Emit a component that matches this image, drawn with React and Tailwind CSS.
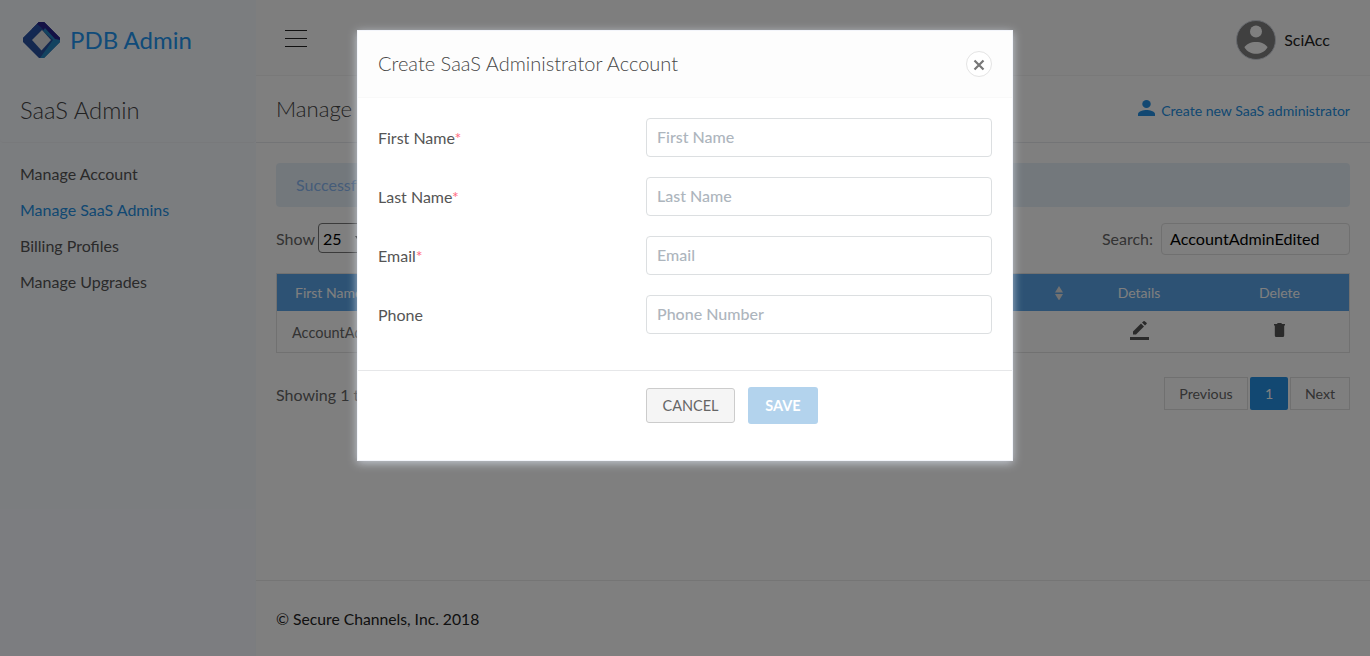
import React from "react";

const NAV = [
  { label: "Manage Account" },
  { label: "Manage SaaS Admins", active: true },
  { label: "Billing Profiles" },
  { label: "Manage Upgrades" },
];

const FIELDS = [
  { label: "First Name", placeholder: "First Name", required: true },
  { label: "Last Name", placeholder: "Last Name", required: true },
  { label: "Email", placeholder: "Email", required: true },
  { label: "Phone", placeholder: "Phone Number" },
];

function Logo() {
  return (
    <svg className="ml-[3px] h-[36px] w-[37px]" viewBox="0 0 37 36">
      <path d="M16 0h5l16 16v4L21 36h-5L0 20v-4z" fill="#28519f" />
      <path d="M16 0h5l16 16v4h-5L19 6l-4 3-6-2z" fill="#28228a" />
      <path d="M16 0L0 16l6 2L19 6l-1-6z" fill="#2750a4" />
      <path d="M16 0h5l16 16v3l-5 1L19 6l-5-4z" fill="#28228a" />
      <path d="M37 18v2L21 36h-4l13-18-10-9 2-3 10 11z" fill="#2787c0" />
      <path d="M19 8L28 18 18.500 28.500 9 18z" fill="#e2e2e4" />
    </svg>
  );
}

function Sidebar() {
  return (
    <aside className="flex w-[256px] shrink-0 flex-col bg-[#f7faff]">
      <div className="flex h-[76px] items-center gap-[10px] pt-[3px] pl-[20px]">
        <Logo />
        <span className="text-[24px] leading-[30px] text-[#2196f3]">PDB Admin</span>
      </div>
      <div className="flex h-[67px] items-center rounded-b border-b border-[#f0f3f6] pl-[20px] text-[23.800px] font-light text-[#444]">
        <span className="pt-[3px]">SaaS Admin</span>
      </div>
      <nav className="flex flex-col pt-[12px] pl-[20px] text-[16px]">
        {NAV.map((n) => (
          <a key={n.label} className={n.active ? "flex h-[36px] items-center pt-px text-[#2491e4]" : "flex h-[36px] items-center pt-px text-[#555]"}>
            {n.label}
          </a>
        ))}
      </nav>
    </aside>
  );
}

function TopBar() {
  return (
    <header className="flex h-[76px] items-center border-b border-[#f2f2f2] bg-[#fdfdfd] pr-[40px] pl-[29px]">
      <div className="mt-[2px] flex h-[17px] w-[22px] flex-col justify-between">
        <span className="h-px bg-[#222]" />
        <span className="h-px bg-[#222]" />
        <span className="h-px bg-[#222]" />
      </div>
      <div className="ml-auto flex items-center gap-[8px] pt-[5px] text-[16px] text-[#222]">
        <svg className="h-[40px] w-[40px]" viewBox="0 0 40 40">
          <circle cx="20" cy="20" r="19.500" fill="#808080" stroke="#cfd3dc" />
          <circle cx="20" cy="11.500" r="6" fill="#fff" />
          <path d="M8.500 27.500C10 24 15 22 20 22s10 2 11.500 5.500C28.500 32 24.500 33.800 20 33.800S11.500 32 8.500 27.500z" fill="#fff" />
        </svg>
        <span>SciAcc</span>
      </div>
    </header>
  );
}

function DataTable() {
  return (
    <div className="mt-[18px] border border-[#e3e3e3]">
      <div className="flex h-[37px] items-center bg-[#5ba5e8] text-[14px] text-[#fff]">
        <span className="w-[732px] pl-[18px]">First Name</span>
        <span className="flex w-[59px] justify-end pr-[5px]">
          <svg className="h-[14px] w-[8px]" viewBox="0 0 8 14">
            <path d="M4 0l4 6.500H0zM4 14.500L8 8H0z" fill="#e2e2e2" />
          </svg>
        </span>
        <span className="w-[142px] text-center">Details</span>
        <span className="flex-1 text-center">Delete</span>
      </div>
      <div className="flex h-[41px] items-center text-[14.500px] text-[#666]">
        <span className="w-[791px] pt-[2px] pl-[15px]">AccountAdminEdited</span>
        <span className="flex w-[142px] justify-center">
          <svg className="mb-[3px] h-[19px] w-[19px]" viewBox="0 0 19 19" fill="#555">
            <path d="M0 16h19v3H0zM3 10.500v3h3l8-8-3-3zM12 1.500l3 3 1.500-1.500q.6-.6 0-1.200L14.700.3q-.6-.6-1.200 0z" />
          </svg>
        </span>
        <span className="flex flex-1 justify-center">
          <svg className="mb-[4px] h-[14px] w-[11px]" viewBox="0 0 11 14" fill="#555">
            <path d="M0 1h3l.7-1h3.600L8 1h3v1.600H0zM.8 2.600h9.400V12.500Q10.200 14 8.700 14H2.300Q.8 14 .8 12.500z" />
          </svg>
        </span>
      </div>
    </div>
  );
}

function Main() {
  return (
    <div className="flex flex-1 flex-col bg-white">
      <TopBar />
      <div className="flex h-[67px] items-center justify-between border-b border-[#e6e8ec] px-[20px]">
        <h1 className="pb-px text-[22.200px] font-light text-[#444]">Manage SaaS Admins</h1>
        <a className="flex items-center gap-[6px] text-[14.070px] text-[#2491e4]">
          <svg className="mb-[3px] h-[16px] w-[17px]" viewBox="0 0 16 16" fill="#2491e4" preserveAspectRatio="none">
            <circle cx="8" cy="4" r="4" />
            <path d="M0 16v-2c0-2.700 5.300-4 8-4s8 1.300 8 4v2z" />
          </svg>
          <span className="pt-[3px]">Create new SaaS administrator</span>
        </a>
      </div>
      <main className="flex flex-col px-[20px] pt-[20px] text-[16px] text-[#666]">
        <div className="flex h-[44px] items-center rounded bg-[#e7f1f9] pl-[20px] text-[#8ab8f2]">Successful</div>
        <div className="mt-[16px] flex h-[32px] items-center justify-between">
          <div className="flex items-center gap-[3px]">
            <span>Show</span>
            <span className="mb-[2px] flex h-[30px] w-[60px] items-center justify-between rounded border border-[#767676] pt-[2px] pr-[14px] pl-[4px] text-black">
              25
              <svg className="h-[6px] w-[8px]" viewBox="0 0 8 6"><path d="M0 0h8L4 6z" fill="#333" /></svg>
            </span>
          </div>
          <div className="flex items-center gap-[8px]">
            <span>Search:</span>
            <span className="flex h-[32px] w-[189px] items-center rounded border border-[#e0e0e0] pl-[8px] text-[16.150px] text-black">AccountAdminEdited</span>
          </div>
        </div>
        <DataTable />
        <div className="mt-[24px] flex h-[33px] items-center justify-between">
          <span className="pt-[3px]">Showing 1 to 1 of 1 entries</span>
          <div className="flex h-full gap-[2px] text-[14.200px]">
            <span className="flex w-[84px] items-center justify-center border border-[#e0e0e0]">Previous</span>
            <span className="flex w-[38px] items-center justify-center rounded-[2px] bg-[#2491e4] text-white">1</span>
            <span className="flex w-[60px] items-center justify-center border border-[#e0e0e0]">Next</span>
          </div>
        </div>
      </main>
      <footer className="mt-auto h-[76px] border-t border-[#ebebeb] pt-[26px] pl-[20px] text-[15.700px] leading-[24px] text-[#222]">
        © Secure Channels, Inc. 2018
      </footer>
    </div>
  );
}

function Modal() {
  return (
    <div className="absolute inset-0 flex items-start justify-center bg-black/50 pt-[30px]">
      <div className="flex h-[431px] w-[656px] flex-col border border-[#f3f5fb] bg-white shadow-[0_2px_9px_rgba(228,235,248,0.7)]">
        <div className="flex h-[67px] items-center justify-between border-b border-[#f9f9f9] bg-[#fdfdfd] px-[20px]">
          <h2 className="pb-[2px] text-[20px] font-light text-[#484848]">Create SaaS Administrator Account</h2>
          <button className="flex h-[26px] w-[26px] items-center justify-center rounded-full border border-[#e4e4e4] bg-white">
            <svg className="mt-px h-[12px] w-[12px]" viewBox="0 0 12 12">
              <path d="M1.500 1.500l9 9M10.500 1.500l-9 9" stroke="#777" strokeWidth="2.200" />
            </svg>
          </button>
        </div>
        <div className="flex h-[273px] flex-col gap-[20px] border-b border-[#e6e7e9] px-[20px] pt-[20px]">
          {FIELDS.map((f) => (
            <label key={f.label} className="flex h-[39px] items-center text-[16px] text-[#555]">
              <span className="w-[268px] pt-px">
                {f.label}
                {f.required && <span className="text-[#ff6b81]">*</span>}
              </span>
              <input placeholder={f.placeholder} className="h-[39px] flex-1 rounded border border-[#dcdfe1] px-[10px] pb-[2px] text-[16px] font-medium placeholder:text-[#adb5bd]" />
            </label>
          ))}
        </div>
        <div className="flex items-center gap-[13px] pt-[16px] pl-[288px] text-[14.500px]">
          <button className="h-[35px] w-[89px] rounded-[3px] border border-[#ccc] bg-[#f5f5f5] text-[#666]">CANCEL</button>
          <button className="h-[37px] w-[70px] rounded-[3px] bg-[#b3d3ed] font-bold text-white">SAVE</button>
        </div>
      </div>
    </div>
  );
}

export default function App() {
  return (
    <div className="relative flex h-[656px] w-[1370px] overflow-hidden font-[Lato,sans-serif]">
      <Sidebar />
      <Main />
      <Modal />
    </div>
  );
}
